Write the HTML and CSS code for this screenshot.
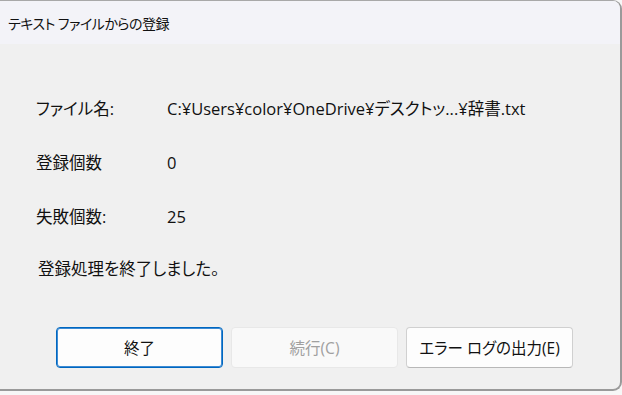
FILE: index.html
```html
<!DOCTYPE html>
<html lang="ja">
  <head>
    <meta charset="UTF-8" />
    <title>テキスト ファイルからの登録</title>
    <link rel="stylesheet" href="styles.css">
  </head>
  <body>
    <div class="window">
      <!-- タイトルバー -->
      <div class="title-bar">テキスト ファイルからの登録</div>

      <!-- 結果 -->
      <div class="content">
        <div class="result">
          <span class="label">ファイル名:</span>
          <span class="value">C:¥Users¥color¥OneDrive¥デスクトッ...¥辞書.txt</span>
          <span class="label">登録個数</span>
          <span class="value">0</span>
          <span class="label">失敗個数:</span>
          <span class="value">25</span>
        </div>
        <div class="message">登録処理を終了しました。</div>

        <div class="buttons">
          <button class="btn default">終了</button>
          <button class="btn" disabled>続行(C)</button>
          <button class="btn">エラー ログの出力(E)</button>
        </div>
      </div>
    </div>
  </body>
</html>
```

FILE: styles.css
```css
* {
  box-sizing: border-box;
  margin: 0;
  padding: 0;
}

html,
body {
  height: 100%;
  background-color: #f7f7f7;
  font-family: "Open Sans", "Noto Sans CJK JP", sans-serif;
  font-feature-settings: "palt";
  color: #111;
}

.window {
  height: 391px;
  background-color: #f0f0f0;
  border-top: 1px solid #a8a8a8;
  border-right: 2px solid #9a9a9a;
  border-bottom: 2px solid #9a9a9a;
  border-radius: 0 9px 9px 0;
  overflow: hidden;
  display: flex;
  flex-direction: column;
}

/* タイトルバー */
.title-bar {
  height: 43px;
  background-color: #f3f3f8;
  padding-left: 8px;
  display: flex;
  align-items: center;
  font-size: 14px;
  letter-spacing: -0.5px;
}

.content {
  flex: 1;
  padding: 37px 0 0 36px;
  font-size: 16.5px;
}

.result {
  display: grid;
  grid-template-columns: 130px auto;
  grid-auto-rows: 54px;
  align-items: center;
}

.value {
  padding-left: 1px;
}

.message {
  height: 50px;
  display: flex;
  align-items: center;
  padding-left: 2px;
}

/* ボタン */
.buttons {
  display: flex;
  gap: 8px;
  padding: 34px 0 0 20px;
}

.btn {
  width: 167px;
  height: 41px;
  font-family: inherit;
  font-feature-settings: "palt";
  font-size: 15.5px;
  color: #111;
  background-color: #fdfdfd;
  border: 1px solid #d0d0d0;
  border-bottom-color: #b8b8b8;
  border-radius: 4px;
}

.btn.default {
  border: 1px solid #0067c0;
  box-shadow: inset 0 0 0 1px #3d8bd4;
}

.btn:disabled {
  color: #a0a0a0;
  background-color: #f9f9f9;
  border-color: #e8e8e8;
}
```
